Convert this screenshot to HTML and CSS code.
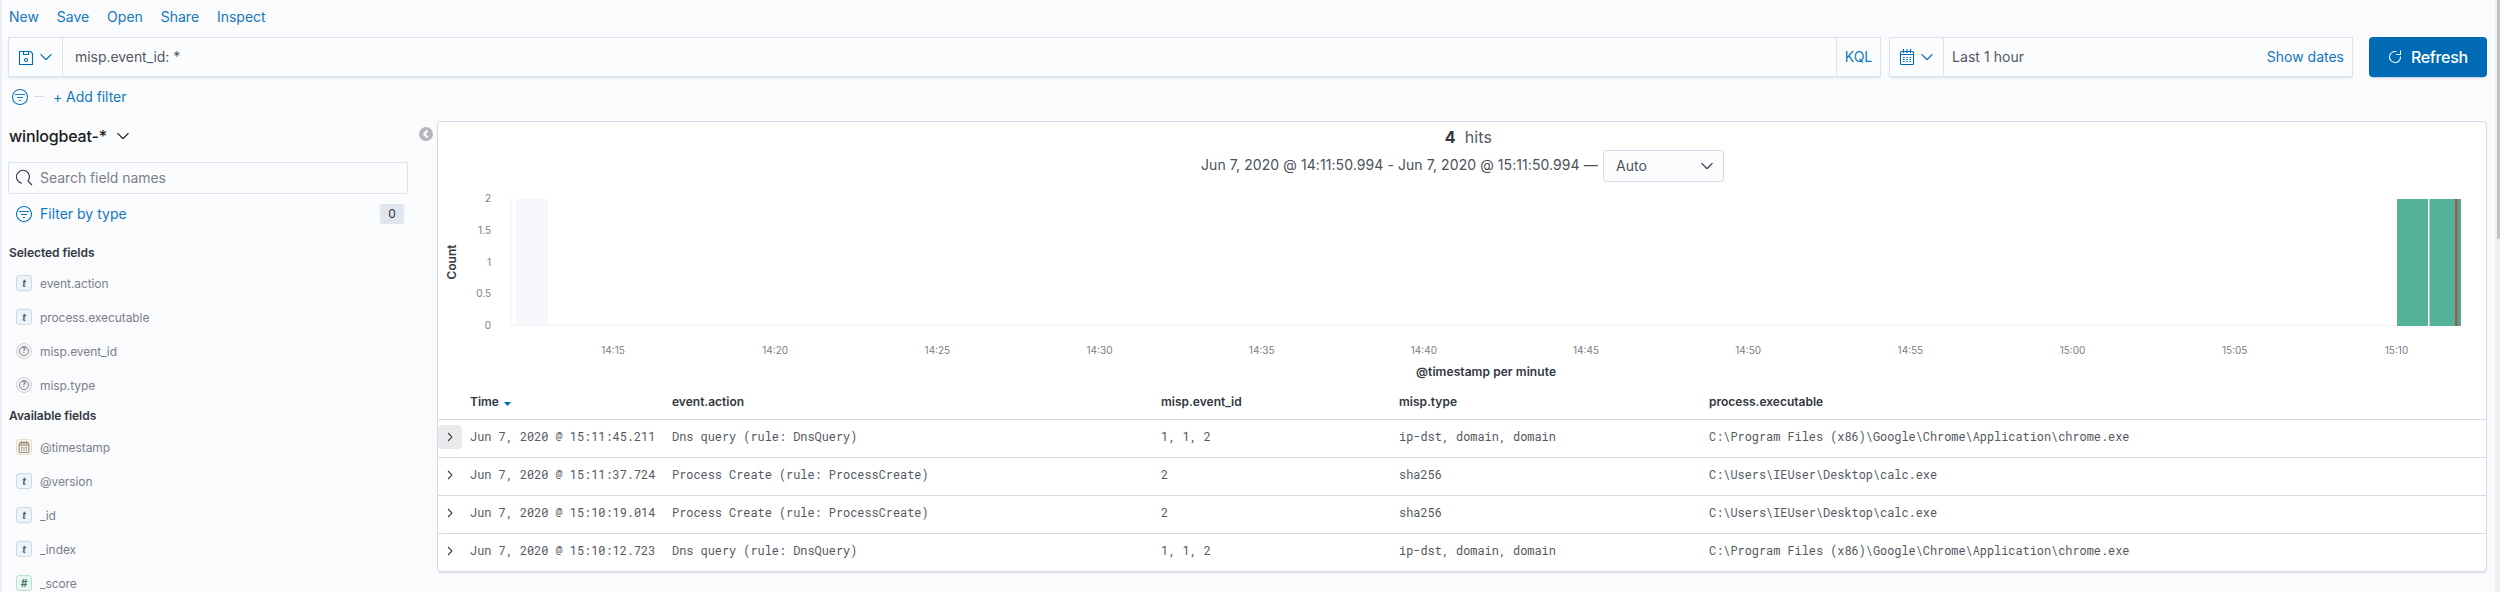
FILE: index.html
```html
<!DOCTYPE html>
<html lang="en">
<head>
<meta charset="utf-8">
<title>Discover</title>
<link rel="stylesheet" href="styles.css">
</head>
<body>
<svg class="defs" aria-hidden="true">
  <symbol id="chev-down" viewBox="0 0 12 8"><path d="M.5 1.2 L5.3 6 Q6 6.7 6.7 6 L11.5 1.2"/></symbol>
  <symbol id="chev-right" viewBox="0 0 8 12"><path d="M2 2 L5.6 5.5 Q6 6 5.6 6.5 L2 10"/></symbol>
  <symbol id="filter" viewBox="0 0 16 16"><circle cx="8" cy="8" r="7.5"/><path d="M3 5.5h10M5 8.5h6M7 11.5h2"/></symbol>
  <symbol id="calendar" viewBox="0 0 16 16"><path d="M2.5 2.5h11q1 0 1 1v11q0 1-1 1h-11q-1 0-1-1v-11q0-1 1-1zM1.5 5.5h13M4.5 0v4M8 0v4M11.500 0v4"/><path d="M4 8.500h8M4 10.500h8M4 12.500h8" stroke-dasharray="1.6 1.6"/></symbol>
</svg>
<div class="app">
  <nav class="topnav"><a>New</a><a>Save</a><a>Open</a><a>Share</a><a>Inspect</a></nav>

  <div class="querybar">
    <div class="control query">
      <button class="addon save">
        <svg class="i" width="16" height="16" viewBox="0 0 16 16"><path d="M1.500 1.500h11l2 2v11h-13zM5.500 1.500v3h5v-3"/><circle cx="8" cy="10" r="1.500"/></svg>
        <svg class="i" width="12" height="8"><use href="#chev-down"/></svg>
      </button>
      <span class="text grow">misp.event_id: *</span>
      <button class="addon kql">KQL</button>
    </div>
    <div class="control dates">
      <button class="addon cal">
        <svg class="i" width="16" height="16"><use href="#calendar"/></svg>
        <svg class="i" width="12" height="8"><use href="#chev-down"/></svg>
      </button>
      <span class="text grow">Last 1 hour</span>
      <a class="show">Show dates</a>
    </div>
    <button class="refresh">
      <svg class="i" width="14" height="14" viewBox="0 0 14 14"><path d="M8.500 1.700 A5.500 5.500 0 1 0 12.500 6.500M8.200 4.500h4.300V.500"/></svg>
      <span>Refresh</span>
    </button>
  </div>

  <div class="filterbar"><svg class="i" width="16" height="16"><use href="#filter"/></svg><i></i><a>+ Add filter</a></div>

  <div class="main">
    <aside class="sidebar">
      <div class="index"><span>winlogbeat-*</span><svg class="i" width="12" height="8"><use href="#chev-down"/></svg></div>
      <div class="search"><svg class="i" width="17" height="17" viewBox="0 0 17 17"><path d="M6 14.200A6.500 6.500 0 1 1 11.800 12.100M12 12l4 4"/></svg><span>Search field names</span></div>
      <div class="bytype"><svg class="i" width="16" height="16"><use href="#filter"/></svg><a>Filter by type</a><b>0</b></div>
      <h3>Selected fields</h3>
      <ul>
        <li><em class="t">t</em>event.action</li>
        <li><em class="t">t</em>process.executable</li>
        <li><em class="u"><s>?</s></em>misp.event_id</li>
        <li><em class="u"><s>?</s></em>misp.type</li>
      </ul>
      <h3 class="avail">Available fields</h3>
      <ul>
        <li><em class="d"><svg class="i" width="12" height="12"><use href="#calendar"/></svg></em>@timestamp</li>
        <li><em class="t">t</em>@version</li>
        <li><em class="t">t</em>_id</li>
        <li><em class="t">t</em>_index</li>
        <li><em class="n">#</em>_score</li>
      </ul>
    </aside>
    <div class="collapse"><svg width="14" height="14" viewBox="0 0 14 14"><circle cx="7" cy="7" r="7" fill="#b4b6b9"/><path d="M8.600 3.500 L5.200 7 L8.600 10.500" fill="none" stroke="#fff" stroke-width="2"/></svg></div>

    <section class="panel">
      <div class="hits"><strong>4</strong><span>hits</span></div>
      <div class="range"><span class="period">Jun 7, 2020 @ 14:11:50.994 - Jun 7, 2020 @ 15:11:50.994 —</span>
        <div class="select"><span>Auto</span><svg class="i" width="12" height="8"><use href="#chev-down"/></svg></div>
      </div>
      <svg class="chart" width="2048" height="199" viewBox="438 184 2048 199">
        <path d="M511 199v127M511 325.500H2461" fill="none" stroke="#f5f6f8" stroke-width="2"/>
        <rect x="516" y="199" width="32" height="127" fill="#f5f7fb"/>
        <rect x="2397" y="199" width="31" height="127" fill="#54b399"/>
        <rect x="2429.500" y="199" width="31.500" height="127" fill="#54b399"/>
        <rect x="2457" y="199" width="3.500" height="127" fill="#609a88"/>
        <rect x="2455" y="199" width="2.300" height="127" fill="#9b5a4f"/>
        <g class="ticks" text-anchor="end">
          <text x="491" y="202">2</text><text x="491" y="234">1.5</text><text x="491" y="266">1</text><text x="491" y="297">0.5</text><text x="491" y="329">0</text>
        </g>
        <g class="ticks" text-anchor="middle">
          <text x="613" y="354">14:15</text><text x="775.200" y="354">14:20</text><text x="937.400" y="354">14:25</text><text x="1099.500" y="354">14:30</text><text x="1261.700" y="354">14:35</text><text x="1423.900" y="354">14:40</text><text x="1586" y="354">14:45</text><text x="1748.200" y="354">14:50</text><text x="1910.400" y="354">14:55</text><text x="2072.500" y="354">15:00</text><text x="2234.700" y="354">15:05</text><text x="2396.500" y="354">15:10</text>
        </g>
        <text class="axis" text-anchor="middle" x="1486" y="376" textLength="140">@timestamp per minute</text>
        <text class="axis" text-anchor="middle" transform="translate(456 262) rotate(-90)">Count</text>
      </svg>
      <table>
        <colgroup><col class="c0"><col class="c1"><col class="c2"><col class="c3"><col class="c4"><col></colgroup>
        <thead><tr><th></th><th>Time<svg class="sort" width="7" height="4"><path d="M0 0h7L3.500 4z" fill="#006bb4"/></svg></th><th>event.action</th><th>misp.event_id</th><th>misp.type</th><th>process.executable</th></tr></thead>
        <tbody>
          <tr><td><span class="toggle on"><svg class="i" width="8" height="12"><use href="#chev-right"/></svg></span></td><td>Jun 7, 2020 @ 15:11:45.211</td><td>Dns query (rule: DnsQuery)</td><td>1, 1, 2</td><td>ip-dst, domain, domain</td><td>C:\Program Files (x86)\Google\Chrome\Application\chrome.exe</td></tr>
          <tr><td><span class="toggle"><svg class="i" width="8" height="12"><use href="#chev-right"/></svg></span></td><td>Jun 7, 2020 @ 15:11:37.724</td><td>Process Create (rule: ProcessCreate)</td><td>2</td><td>sha256</td><td>C:\Users\IEUser\Desktop\calc.exe</td></tr>
          <tr><td><span class="toggle"><svg class="i" width="8" height="12"><use href="#chev-right"/></svg></span></td><td>Jun 7, 2020 @ 15:10:19.014</td><td>Process Create (rule: ProcessCreate)</td><td>2</td><td>sha256</td><td>C:\Users\IEUser\Desktop\calc.exe</td></tr>
          <tr><td><span class="toggle"><svg class="i" width="8" height="12"><use href="#chev-right"/></svg></span></td><td>Jun 7, 2020 @ 15:10:12.723</td><td>Dns query (rule: DnsQuery)</td><td>1, 1, 2</td><td>ip-dst, domain, domain</td><td>C:\Program Files (x86)\Google\Chrome\Application\chrome.exe</td></tr>
        </tbody>
      </table>
    </section>
  </div>
</div>
<div class="scrollbar"><div class="thumb"></div></div>
</body>
</html>
```
FILE: styles.css
```css
* { box-sizing: border-box; }
body {
  margin: 0; height: 592px; overflow: hidden; display: flex;
  background: #fafbfd; color: #343741;
  font: 14px/20px Inter, "Liberation Sans", sans-serif;
}
button { font: inherit; border: 0; margin: 0; background: none; }
a { color: #1478b9; }
.defs { position: absolute; width: 0; height: 0; }
.i { fill: none; stroke: currentColor; stroke-width: 1.1; flex: none; display: block; }

.app { width: 2495px; height: 592px; overflow: hidden; border-left: 2px solid #eceef5; padding: 0 8px 0 6px; flex: none; }
.scrollbar { width: 5px; background: #f0f0f1; padding-left: 2px; }
.thumb { height: 239px; background: #c1c1c1; }

.topnav { height: 37px; padding: 7px 0 0 1px; display: flex; }
.topnav a { white-space: nowrap; margin-right: 17.9px; }

.querybar { height: 40px; display: flex; }
.control {
  display: flex; align-items: center; background: #fbfcfd;
  border: 1px solid #dfe3ec; box-shadow: 0 2px 2px -1px rgba(152,162,179,.3);
}
.query { width: 1873px; margin-right: 8px; }
.dates { width: 464px; margin-right: 16px; }
.addon { height: 38px; display: flex; align-items: center; color: #006bb4; padding: 0; }
.save { width: 54px; border-right: 1px solid #dfe3ec; padding-left: 9px; gap: 6px; }
.save .i:first-child { margin-top: 2px; }
.kql { width: 44px; border-left: 1px solid #dfe3ec; justify-content: center; color: #1478b9; }
.cal { width: 54px; border-right: 1px solid #dfe3ec; padding-left: 9px; gap: 6px; }
.text { padding-left: 12px; color: #545761; }
.query .text { letter-spacing: -.05px; }
.dates .text { padding-left: 8px; letter-spacing: .06px; }
.grow { flex: 1; }
.show { padding-right: 8px; }
.refresh {
  width: 118px; height: 40px; border-radius: 4px; background: #006bb4; color: #fff;
  display: flex; align-items: center; padding: 0 0 1px 19px; gap: 9px; font-size: 16px; font-weight: 500;
  letter-spacing: -.35px; box-shadow: 0 2px 2px -1px rgba(54,97,126,.3);
}

.filterbar { height: 44px; display: flex; align-items: flex-start; padding: 10px 0 0 4px; }
.filterbar .i { color: #1478b9; margin-top: 2px; }
.filterbar i { width: 10px; height: 1px; background: #d3dae6; margin: 9px 9px 0 6px; }
.filterbar a { letter-spacing: -.05px; }

.main { display: flex; height: 471px; }
.sidebar { width: 400px; flex: none; }
.index { display: flex; align-items: center; gap: 10px; height: 24px; margin: 3px 0 0 1px; font-size: 16px; font-weight: 500; color: #1a1c21; letter-spacing: -.17px; }
.search { margin-top: 14px; height: 32px; border: 1px solid #dfe3ec; border-radius: 1px; background: #fbfcfd; display: flex; align-items: center; padding-left: 7px; gap: 7px; color: #7c808b; letter-spacing: -.06px; }
.search .i { color: #343741; margin-top: -2px; }
.bytype { display: flex; align-items: center; height: 20px; margin-top: 10px; padding: 0 4px 0 8px; }
.bytype .i { color: #1478b9; }
.bytype a { flex: 1; padding-left: 8px; }
.bytype b { width: 24px; height: 20px; border-radius: 3px; background: #e0e5ee; text-align: center; font-size: 12px; font-weight: 400; }
.sidebar h3 { margin: 19px 0 3px 1px; font-size: 12px; line-height: 20px; font-weight: 600; letter-spacing: -.04px; }
.sidebar h3.avail { margin: 4px 0 4px 1px; }
.sidebar ul { margin: 0; padding: 0; list-style: none; }
.sidebar li { height: 34px; display: flex; align-items: center; padding: 1px 0 0 8px; font-size: 12px; letter-spacing: -.08px; color: #7c808b; }
.sidebar em {
  width: 16px; height: 16px; margin: -2px 8px 0 0; border: 1px solid; border-radius: 3px; flex: none;
  display: flex; align-items: center; justify-content: center; font: italic 700 10px/14px Inter, sans-serif;
}
.t { background: #eef3f8; border-color: #c8dcec !important; color: #3c6a93; }
.n { background: #eaf6f2; border-color: #bbe1d6 !important; color: #387765; }
.d { background: #f9f6f0; border-color: #eadfcb !important; color: #776b4e; }
.u { background: #f1f2f3; border-color: #d0d2d5 !important; border-radius: 8px !important; color: #787b80; }
.u s { width: 10px; height: 10px; border: 1px solid #85888d; border-radius: 5px; text-decoration: none; font: normal 700 7px/8px Inter, sans-serif; text-align: center; }
.collapse { width: 29px; flex: none; padding: 5px 0 0 11px; }

.panel { width: 2050px; height: 451px; flex: none; background: #fff; border: 1px solid #d3dae6; border-radius: 4px; box-shadow: 0 2px 2px -1px rgba(152,162,179,.35); }
.hits { height: 27px; padding-top: 3px; display: flex; justify-content: center; align-items: center; gap: 9px; font-size: 16px; padding-left: 13px; }
.hits strong { font-weight: 700; }
.hits span { color: #545761; letter-spacing: .15px; }
.range { height: 35px; display: flex; align-items: flex-start; padding: 1px 0 0 763px; line-height: 30px; }
.period { width: 402px; white-space: nowrap; color: #4d505a; letter-spacing: .08px; }
.select { width: 121px; height: 32px; border: 1px solid #d3dae6; border-radius: 3px; background: #fbfcfd; display: flex; align-items: center; justify-content: space-between; padding: 0 10px 0 12px; color: #4d505a; }
.select .i { color: #343741; }
.chart { display: block; }
.ticks { font-size: 10px; fill: #7b7e87; }
.axis { font-size: 12px; font-weight: 600; fill: #343741; }

table { width: 2048px; border-collapse: separate; border-spacing: 0; table-layout: fixed; }
.c0 { width: 32px; } .c1 { width: 202px; } .c2 { width: 489px; } .c3 { width: 238px; } .c4 { width: 310px; }
th { height: 37px; padding: 2px 0 0; text-align: left; font-size: 12px; line-height: 18px; font-weight: 600; border-bottom: 1px solid #d3dae6; }
td { height: 38px; padding: 0 0 3px; white-space: nowrap; font: 11.9px/18px "Roboto Mono", "Liberation Mono", monospace; letter-spacing: -.01px; color: #545761; border-bottom: 1px solid #d3dae6; }
tr:last-child td { height: 37px; border-bottom: 0; }
thead tr:last-child th { border-bottom: 1px solid #d3dae6; }
.sort { margin-left: 5px; vertical-align: 0; }
.toggle { display: flex; width: 24px; height: 24px; border-radius: 4px; align-items: center; justify-content: center; margin-top: -1px; color: #343741; }
.on { background: #e9eaec; }
```
